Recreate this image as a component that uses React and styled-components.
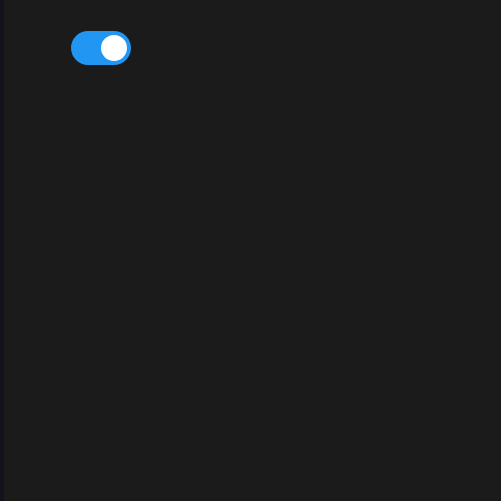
import React, { useState } from 'react';
import styled, { createGlobalStyle } from 'styled-components';

const GlobalStyle = createGlobalStyle`
    html, body {
        margin: 0;
        padding: 0;
        background: #1b1b1b;
        font-family: "Liberation Sans", Arial, sans-serif;
    }
    html {
        overflow-y: scroll;
    }
`;

const Page = styled.div`
    box-sizing: border-box;
    min-height: 506px;
    border-left: 4px solid #13131d;
    padding: 31px 0 0 67px;
`;

const Switch = styled.label`
    position: relative;
    display: inline-block;
    width: 60px;
    height: 34px;
`;

const Input = styled.input`
    opacity: 0;
    width: 0;
    height: 0;
    margin: 0;
`;

const Slider = styled.span`
    position: absolute;
    cursor: pointer;
    inset: 0;
    border-radius: 34px;
    background: ${p => (p.$on ? '#2196f3' : '#ccc')};
    transition: background 0.3s;

    &::before {
        content: '';
        position: absolute;
        width: 26px;
        height: 26px;
        left: 4px;
        bottom: 4px;
        border-radius: 50%;
        background: #fff;
        transform: translateX(${p => (p.$on ? '26px' : '0')});
        transition: transform 0.3s;
    }
`;

export default function App() {
    const [ on, setOn ] = useState(true);
    return (
        <>
            <GlobalStyle />
            <Page>
                <Switch>
                    <Input type="checkbox" checked={on} onChange={() => setOn(!on)} />
                    <Slider $on={on} />
                </Switch>
            </Page>
        </>
    );
}
